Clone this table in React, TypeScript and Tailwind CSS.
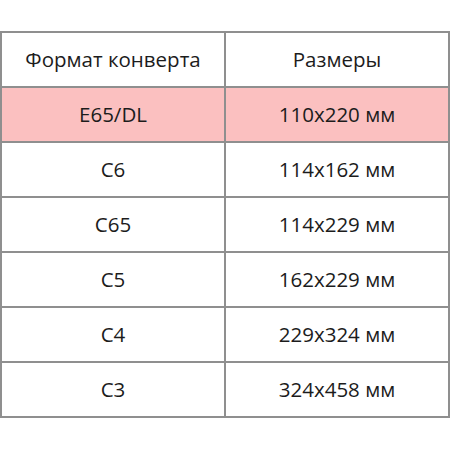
const rows = [
  ["E65/DL", "110x220 мм"],
  ["C6", "114x162 мм"],
  ["C65", "114x229 мм"],
  ["C5", "162x229 мм"],
  ["C4", "229x324 мм"],
  ["C3", "324x458 мм"],
];

export default function App() {
  return (
    <div className="h-[450px] w-[450px] bg-white pt-[31px] font-['Open_Sans',sans-serif] text-[20.5px] text-[#1c1c1c]">
      <table className="w-[450px] border-collapse table-fixed">
        <tbody>
          <tr className="h-[55px]">
            <td className="border-2 border-[#8f8f8f] text-center">Формат конверта</td>
            <td className="border-2 border-[#8f8f8f] text-center">Размеры</td>
          </tr>
          {rows.map(([format, size], i) => (
            <tr key={format} className={i === 0 ? "h-[55px] bg-[#fbc0c0]" : "h-[55px]"}>
              <td className="border-2 border-[#8f8f8f] text-center">{format}</td>
              <td className="border-2 border-[#8f8f8f] text-center">{size}</td>
            </tr>
          ))}
        </tbody>
      </table>
    </div>
  );
}
